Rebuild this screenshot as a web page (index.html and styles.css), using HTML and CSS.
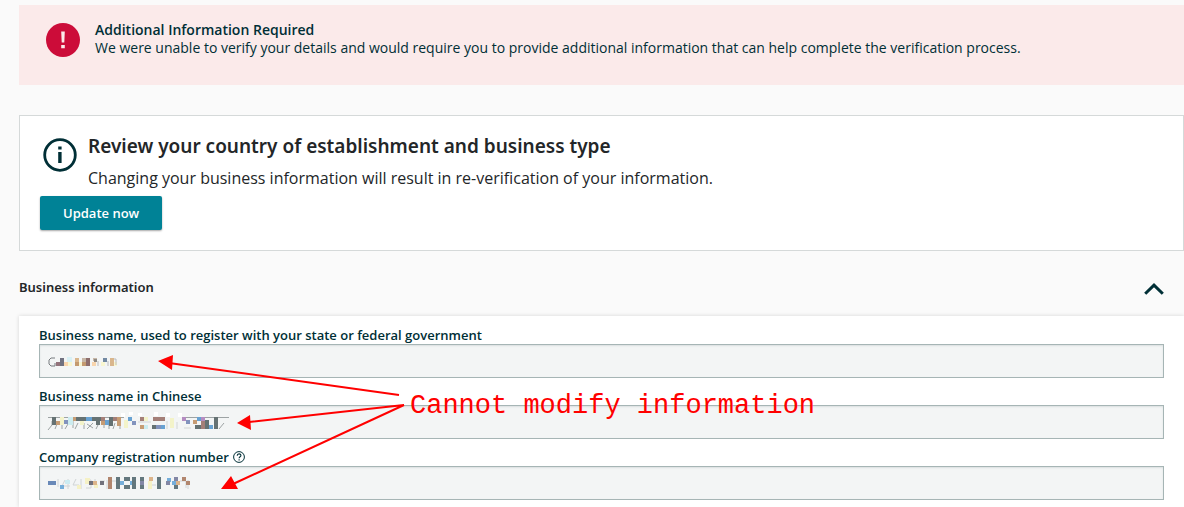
FILE: index.html
```html
<!DOCTYPE html>
<html lang="en">
    <head>
        <meta charset="UTF-8" />
        <meta name="viewport" content="width=device-width, initial-scale=1.0" />
        <title>Business information</title>
        <link rel="stylesheet" href="styles.css">
    </head>
    <body>
        <!-- error banner -->
        <section class="alert">
            <svg class="icon" viewBox="0 0 34 34" aria-hidden="true">
                <circle cx="17" cy="17" r="17" fill="#cc0c39" />
                <path d="M15.2 8.5h3.6l-.5 11h-2.6zM15.2 22h3.6v3.3h-3.6z" fill="#fbeaea" />
            </svg>
            <div class="alert-text">
                <strong>Additional Information Required</strong>
                <p>We were unable to verify your details and would require you to provide additional information that can help complete the verification process.</p>
            </div>
        </section>

        <!-- review box -->
        <section class="review">
            <div class="review-head">
                <svg class="icon" viewBox="0 0 34 34" aria-hidden="true">
                    <circle cx="17" cy="17" r="15.3" fill="none" stroke="#002f36" stroke-width="2.8" />
                    <path d="M15.2 8.5h3.4v3h-3.4zM15.2 14h3.4v11h-3.4z" fill="#002f36" />
                </svg>
                <div>
                    <h1>Review your country of establishment and business type</h1>
                    <p>Changing your business information will result in re-verification of your information.</p>
                </div>
            </div>
            <button type="button" class="btn">Update now</button>
        </section>

        <div class="section-bar">
            <h2>Business information</h2>
            <button type="button" class="toggle" aria-label="Collapse">
                <svg viewBox="0 0 20 12" aria-hidden="true">
                    <path d="M1.2 10.8L10 2.2l8.8 8.6" fill="none" stroke="#002f36" stroke-width="3" />
                </svg>
            </button>
        </div>

        <form class="panel">
            <div class="field">
                <label for="bizName">Business name, used to register with your state or federal government</label>
                <div class="box">
                    <input type="text" id="bizName" disabled>
                    <svg class="mask" width="184" height="16" viewBox="0 0 184 16" aria-hidden="true">
                        <path d="M7 4H3L1 6v4l2 2h4V9" fill="none" stroke="#777b7e" />
                        <path d="M8 8h4v4H8z" fill="#93737b" />
                        <path d="M12 4h4v8h-4z" fill="#70717f" />
                        <path d="M16 8h4v4h-4zM44 8h4v4h-4z" fill="#f8d5ad" />
                        <path d="M19 3h5v5h-5z" fill="#d9f1f5" />
                        <path d="M20 8h4v4h-4zM31 8h3v4h-3zM53 8h4v4h-4zM65 8h4v4h-4z" fill="#f8f6d0" />
                        <path d="M27 4h4v4h-4zM62 4h4v8h-4z" fill="#d9b68c" />
                        <path d="M27 8h4v4h-4zM34 8h4v4h-4z" fill="#c49a70" />
                        <path d="M38 4h4v8h-4z" fill="#8e6e6c" />
                        <path d="M34 4h4v4h-4zM45 4h4v3h-4z" fill="#c7b7a6" />
                        <path d="M46 5h3v3h-3z" fill="#8d8984" />
                        <path d="M55 4h4v4h-4z" fill="#7289a2" />
                        <path d="M50 7v5M60 7v5M66 5h2v6" fill="none" stroke="#b9babb" />
                    </svg>
                </div>
            </div>
            <div class="field">
                <label for="bizNameCn">Business name in Chinese</label>
                <div class="box">
                    <input type="text" id="bizNameCn" disabled>
                    <svg class="mask" width="184" height="16" viewBox="0 0 184 16" aria-hidden="true">
                        <path d="M0 2.5h76M135 2.5h46M4 6v4l-4 5M9 9l-2 5M14 7v7M20 9l-3 5M25 6v7M30 8l-3 6M36 8v6M39 9l6 4M45 8l-6 6M51 8l-3 6M56 7v6M61 9v5M67 8l-2 6M72 3v11M176 8l-5 6" fill="none" stroke="#9da3a4" />
                        <path d="M4 2h4v8H4zM28 2h25v4H28zM48 6h4v4h-4zM61 2h4v9h-4zM157 5h4v9h-4zM166 2h4v12h-4zM104 10h4v4h-4zM147 10h6v4h-6z" fill="#657273" />
                        <path d="M8 6h4v4H8zM24 2h4v4h-4zM53 6h4v4h-4zM69 2h4v9h-4zM92 10h4v4h-4zM145 5h4v4h-4z" fill="#c69c74" />
                        <path d="M12 2h4v8h-4zM32 6h4v4h-4zM96 2h4v4h-4zM122 3h4v10h-4zM76 5h4v8h-4z" fill="#f3f3c9" />
                        <path d="M20 2h5v8h-5zM96 10h4v4h-4z" fill="#ccecef" />
                        <path d="M38 2h6v4h-6zM57 5h4v5h-4zM80 2h4v4h-4zM112 10h5v4h-5zM149 2h6v4h-6zM161 10h4v4h-4z" fill="#68a2d2" />
                        <path d="M16 5h4v4h-4zM84 6h4v4h-4zM108 10h5v4h-5zM138 5h4v4h-4z" fill="#8293bd" />
                        <path d="M53 2h4v4h-4zM65 2h4v4h-4zM92 2h4v4h-4zM105 2h12v4h-12zM153 6h4v8h-4z" fill="#a47f78" />
                        <path d="M134 2h4v4h-4zM153 2h4v4h-4z" fill="#b48cc1" />
                        <path d="M73-2h4v4h-4zM81-3h4v3h-4zM90-2h4v3h-4zM106-3h4v4h-4zM118-2h4v4h-4zM130-2h4v4h-4z" fill="#fff" />
                        <path d="M90 7h13M119 6v8M129 7v7M143 13h-7" fill="none" stroke="#d2d5d5" />
                    </svg>
                </div>
            </div>
            <div class="field">
                <label for="regNo">Company registration number
                    <svg class="help" viewBox="0 0 12 12" aria-hidden="true">
                        <circle cx="6" cy="6" r="5.4" fill="none" stroke="#002f36" />
                        <path d="M4.2 4.7C4.2 2.3 7.9 2.3 7.9 4.5 7.9 5.8 6.1 5.8 6.1 7.2M6.1 8.2v1.2" fill="none" stroke="#002f36" stroke-width="1.1" />
                    </svg>
                </label>
                <div class="box">
                    <input type="text" id="regNo" disabled>
                    <svg class="mask" width="184" height="16" viewBox="0 0 184 16" aria-hidden="true">
                        <path d="M10 3v8M17 4l-3 6h8M20 3v10M28 3l-3 6h6M33 3v10M38 4h5v8h-5M47 3v9M52 5h5M59 4v9M64 5h5v8M102 9h6M132 5h6v7M140 4v9" fill="none" stroke="#d0d4d5" />
                        <path d="M0 5h8v4H0z" fill="#6989b8" />
                        <path d="M12 9h4v4h-4zM72 5h4v4h-4zM82 5h3v4h-3zM119 2h4v4h-4zM124 5h4v4h-4z" fill="#75aeda" />
                        <path d="M17 4h5v4h-5z" fill="#ccecf2" />
                        <path d="M29 9h4v4h-4zM37 2h5v6h-5zM46 8h4v4h-4zM100 5h4v8h-4z" fill="#f5f1c5" />
                        <path d="M41 5h4v4h-4zM52 5h4v4h-4z" fill="#71717b" />
                        <path d="M45 5h4v4h-4zM101 1h4v4h-4zM128 5h4v4h-4z" fill="#dcb48a" />
                        <path d="M60 1h4v12h-4zM134 1h4v4h-4zM138 5h4v4h-4z" fill="#b1866e" />
                        <path d="M68 1h4v12h-4zM76 1h6v4h-6zM76 9h6v4h-6zM84 1h4v12h-4zM92 1h4v4h-4zM92 9h4v4h-4zM109 1h4v12h-4zM126 9h4v4h-4z" fill="#63777d" />
                        <path d="M92 5h4v4h-4zM118 5h4v4h-4zM126 1h4v4h-4z" fill="#8287a5" />
                    </svg>
                </div>
            </div>

            <!-- note with arrows, lies over the fields -->
            <svg class="arrows" width="390" height="190" viewBox="0 0 390 190" aria-hidden="true">
                <path d="M150 47L380 79M230 106L385 89M214 168L385 89" />
                <path class="tip" d="M139 45l14 9 1-15zM218 107l14 7-1-15zM202 173l17 0-7-13z" />
            </svg>
            <p class="note">Cannot modify information</p>
        </form>
    </body>
</html>
```

FILE: styles.css
```css
* {
    box-sizing: border-box;
}
html,
body {
    margin: 0;
    height: 100%;
}
body {
    display: flex;
    flex-direction: column;
    padding: 5px 0 0 19px;
    background: #fafafa;
    color: #002f36;
    font-family: "Open Sans", "Noto Sans", sans-serif;
    font-size: 13px;
    line-height: 18px;
}
h1,
h2,
p {
    margin: 0;
}
h1,
h2 {
    font-family: "Noto Sans", sans-serif;
    font-weight: 600;
}
.icon {
    flex: none;
    width: 34px;
    height: 34px;
}

/* alert */
.alert {
    display: flex;
    gap: 15px;
    min-height: 80px;
    padding: 16px 27px;
    background: #fbeaea;
    font-size: 14px;
}
.alert .icon {
    margin-top: 2px;
}
.alert strong {
    font-weight: 600;
}

/* review box */
.review {
    margin-top: 30px;
    padding: 16px 20px 20px;
    border: 1px solid #d5d9d9;
    background: #fff;
}
.review-head {
    display: flex;
    gap: 11px;
    margin-bottom: 6px;
    padding-left: 3px;
    color: #232628;
}
.review-head .icon {
    margin-top: 6px;
}
.review h1 {
    font-size: 19px;
    line-height: 28px;
}
.review p {
    margin-top: 6px;
    font-size: 16px;
    line-height: 24px;
}
.btn {
    display: block;
    height: 34px;
    padding: 0 23px;
    border: 0;
    border-radius: 2px;
    background: #008296;
    box-shadow: 0 1px 2px rgba(0, 0, 0, .35);
    color: #fff;
    font: 600 13px "Open Sans", "Noto Sans", sans-serif;
}

/* section title */
.section-bar {
    display: flex;
    justify-content: space-between;
    align-items: center;
    height: 65px;
    padding: 6px 20px 0 0;
}
.section-bar h2 {
    color: #232628;
    font-size: 13px;
}
.toggle {
    padding: 4px 0 0;
    border: 0;
    background: none;
}
.toggle svg {
    display: block;
    width: 20px;
    height: 12px;
}

/* form */
.panel {
    position: relative;
    flex: 1;
    padding: 10px 20px 0;
    background: #fff;
    box-shadow: 0 0 4px rgba(0, 0, 0, .15);
}
.field {
    margin-bottom: 9px;
}
.field:last-of-type {
    margin-bottom: 0;
}
.field label {
    display: flex;
    align-items: center;
    gap: 4px;
    font-weight: 600;
}
.help {
    width: 12px;
    height: 12px;
}
.box {
    position: relative;
}
.box input {
    display: block;
    width: 100%;
    height: 34px;
    padding: 0 9px;
    border: 1px solid #a6b5b5;
    border-radius: 0;
    background: #f3f5f5;
    box-shadow: inset 0 1px 2px rgba(0, 40, 50, .1);
}
.mask {
    position: absolute;
    top: 10px;
    left: 9px;
    overflow: visible;
}

/* note */
.arrows {
    position: absolute;
    top: 0;
    left: 0;
    fill: none;
    stroke: #f00;
    stroke-width: 2;
    pointer-events: none;
}
.arrows .tip {
    fill: #f00;
    stroke: none;
}
.note {
    position: absolute;
    top: 72px;
    left: 391px;
    color: #f00;
    font-family: "Liberation Mono", monospace;
    font-size: 27px;
    line-height: 36px;
    white-space: nowrap;
}
```
